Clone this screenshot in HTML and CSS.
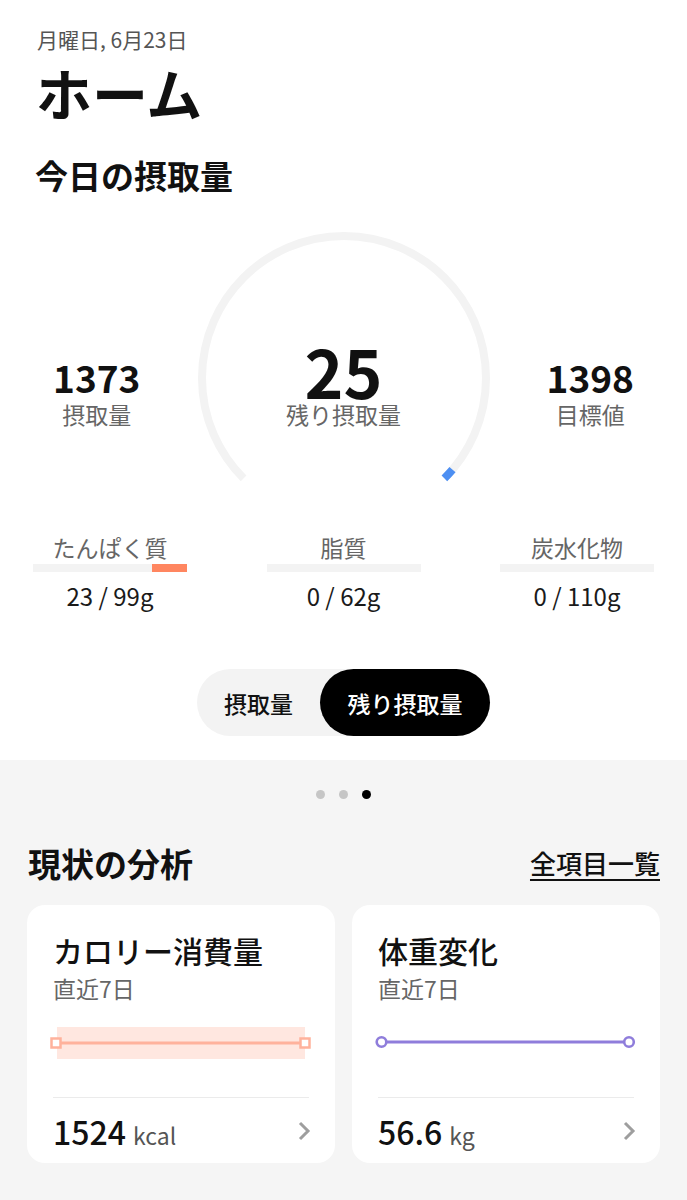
FILE: index.html
```html
<!DOCTYPE html>
<html lang="ja">
<head>
<meta charset="utf-8">
<title>ホーム</title>
<link rel="stylesheet" href="styles.css">
</head>
<body>
<section class="top">
  <div class="date">月曜日, 6月23日</div>
  <h1 class="title">ホーム</h1>
  <h2 class="heading">今日の摂取量</h2>

  <div class="gauge-row">
    <div class="stat side">
      <div class="stat-num">1373</div>
      <div class="stat-label">摂取量</div>
    </div>
    <div class="gauge">
      <svg class="gauge-svg" width="300" height="300" viewBox="0 0 300 300">
        <path d="M 49.6 250.4 A 142 142 0 1 1 250.4 250.4" fill="none" stroke="#f3f3f3" stroke-width="8"/>
        <path d="M 258.5 241.7 A 142 142 0 0 1 250.4 250.4" fill="none" stroke="#4d8ff2" stroke-width="8"/>
      </svg>
      <div class="stat center">
        <div class="stat-big">25</div>
        <div class="stat-label">残り摂取量</div>
      </div>
    </div>
    <div class="stat side">
      <div class="stat-num">1398</div>
      <div class="stat-label">目標値</div>
    </div>
  </div>

  <div class="macros">
    <div class="macro">
      <div class="macro-label">たんぱく質</div>
      <div class="bar"><div class="bar-fill" style="width:23%"></div></div>
      <div class="macro-value">23 / 99g</div>
    </div>
    <div class="macro">
      <div class="macro-label">脂質</div>
      <div class="bar"></div>
      <div class="macro-value">0 / 62g</div>
    </div>
    <div class="macro">
      <div class="macro-label">炭水化物</div>
      <div class="bar"></div>
      <div class="macro-value">0 / 110g</div>
    </div>
  </div>

  <div class="toggle-wrap">
    <div class="toggle">
      <div class="seg seg-left">摂取量</div>
      <div class="seg seg-active">残り摂取量</div>
    </div>
  </div>
</section>

<section class="analysis">
  <div class="dots">
    <span class="dot"></span><span class="dot"></span><span class="dot active"></span>
  </div>
  <div class="section-head">
    <h2 class="section-title">現状の分析</h2>
    <a class="section-link">全項目一覧</a>
  </div>
  <div class="cards">
    <div class="card">
      <div class="card-title">カロリー消費量</div>
      <div class="card-sub">直近7日</div>
      <svg class="chart" width="256" height="60" viewBox="0 0 256 60">
        <rect x="4" y="14" width="248" height="32" fill="#ffe7e0"/>
        <line x1="3" y1="30" x2="252" y2="30" stroke="#ffb29c" stroke-width="3"/>
        <rect x="-1.5" y="25.5" width="9" height="9" fill="#fff" stroke="#ffb29c" stroke-width="2.5"/>
        <rect x="247.5" y="25.5" width="9" height="9" fill="#fff" stroke="#ffb29c" stroke-width="2.5"/>
      </svg>
      <div class="divider"></div>
      <div class="card-foot">
        <div class="value"><span class="num">1524</span><span class="unit">kcal</span></div>
        <svg class="chev" width="14" height="20" viewBox="0 0 14 20"><path d="M3 2 L11 10 L3 18" fill="none" stroke="#9e9e9e" stroke-width="3"/></svg>
      </div>
    </div>
    <div class="card">
      <div class="card-title">体重変化</div>
      <div class="card-sub">直近7日</div>
      <svg class="chart" width="256" height="60" viewBox="0 0 256 60">
        <line x1="3" y1="29" x2="251" y2="29" stroke="#8f7ddb" stroke-width="3"/>
        <circle cx="3.5" cy="29" r="4.8" fill="#fff" stroke="#8f7ddb" stroke-width="2.6"/>
        <circle cx="251" cy="29" r="4.8" fill="#fff" stroke="#8f7ddb" stroke-width="2.6"/>
      </svg>
      <div class="divider"></div>
      <div class="card-foot">
        <div class="value"><span class="num">56.6</span><span class="unit">kg</span></div>
        <svg class="chev" width="14" height="20" viewBox="0 0 14 20"><path d="M3 2 L11 10 L3 18" fill="none" stroke="#9e9e9e" stroke-width="3"/></svg>
      </div>
    </div>
  </div>
</section>
</body>
</html>
```

FILE: styles.css
```css
html, body {
  margin: 0;
  padding: 0;
  background: #f5f5f5;
  font-family: "Noto Sans CJK JP", "Noto Sans", sans-serif;
  color: #111;
}

.top {
  background: #fff;
  padding: 26px 0 24px;
}

.date {
  margin-left: 37px;
  font-size: 21px;
  line-height: 26px;
  color: #555;
}

.title {
  margin: 9px 0 0 36px;
  font-size: 56px;
  line-height: 62px;
  font-weight: 700;
}

.heading {
  margin: 30px 0 0 35px;
  font-size: 33px;
  line-height: 44px;
  font-weight: 700;
}

.gauge-row {
  margin-top: 31px;
  display: grid;
  grid-template-columns: 1fr 300px 1fr;
  height: 300px;
}

.stat {
  display: flex;
  flex-direction: column;
  align-items: center;
}

.side {
  padding-top: 127px;
}

.stat-num {
  font-size: 37px;
  line-height: 44px;
  font-weight: 700;
}

.stat-label {
  font-size: 23px;
  line-height: 30px;
  color: #666;
}

.gauge {
  display: grid;
}

.gauge-svg,
.gauge .center {
  grid-area: 1 / 1;
}

.gauge .center {
  padding-top: 113px;
}

.stat-big {
  font-size: 66px;
  line-height: 58px;
  font-weight: 700;
}

.macros {
  display: flex;
  justify-content: space-between;
  padding: 0 33px;
  margin-top: 4px;
}

.macro {
  width: 154px;
  display: flex;
  flex-direction: column;
  align-items: center;
}

.macro-label {
  font-size: 23px;
  line-height: 30px;
  color: #666;
}

.bar {
  margin-top: 2px;
  width: 100%;
  height: 8px;
  background: #f3f3f3;
  display: flex;
  justify-content: flex-end;
}

.bar-fill {
  height: 100%;
  background: #ff8660;
}

.macro-value {
  margin-top: 9px;
  font-size: 24px;
  line-height: 30px;
  color: #1a1a1a;
}

.toggle-wrap {
  margin-top: 58px;
  display: flex;
  justify-content: center;
}

.toggle {
  display: flex;
  background: #f3f3f3;
  border-radius: 34px;
  height: 67px;
}

.seg {
  display: flex;
  align-items: center;
  justify-content: center;
  font-size: 23px;
  font-weight: 500;
  border-radius: 34px;
}

.seg-left {
  width: 123px;
  color: #111;
}

.seg-active {
  width: 170px;
  background: #000;
  color: #fff;
}

.analysis {
  padding: 30px 27px 40px;
}

.dots {
  display: flex;
  justify-content: center;
  gap: 14px;
}

.dot {
  width: 9px;
  height: 9px;
  border-radius: 50%;
  background: #c6c6c6;
}

.dot.active {
  background: #000;
}

.section-head {
  margin-top: 42px;
  display: flex;
  justify-content: space-between;
  align-items: center;
}

.section-title {
  margin: 0 0 0 1px;
  font-size: 33px;
  line-height: 44px;
  font-weight: 700;
}

.section-link {
  font-size: 26px;
  line-height: 44px;
  font-weight: 500;
  color: #111;
  text-decoration: underline;
  text-underline-offset: 5px;
  text-decoration-thickness: 2px;
}

.cards {
  margin-top: 20px;
  display: grid;
  grid-template-columns: 1fr 1fr;
  gap: 17px;
}

.card {
  background: #fff;
  border-radius: 18px;
  padding: 25px 26px 9px;
  display: flex;
  flex-direction: column;
}

.card-title {
  font-size: 30px;
  line-height: 40px;
  font-weight: 500;
}

.card-sub {
  margin-top: 3px;
  font-size: 23px;
  line-height: 30px;
  color: #666;
}

.chart {
  margin-top: 10px;
  display: block;
  overflow: visible;
}

.divider {
  margin-top: 24px;
  height: 1px;
  background: #ebebeb;
}

.card-foot {
  margin-top: 16px;
  height: 40px;
  display: flex;
  justify-content: space-between;
  align-items: center;
}

.value {
  line-height: 40px;
}

.num {
  font-size: 32px;
  font-weight: 500;
}

.unit {
  margin-left: 7px;
  font-size: 23px;
  color: #555;
}

.chev {
  display: block;
  margin: 0 -2px 6px 0;
}
```
